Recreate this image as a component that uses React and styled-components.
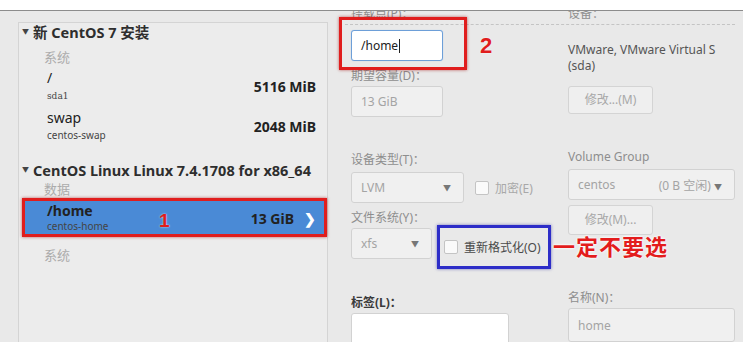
import React from 'react'
import styled, { createGlobalStyle } from 'styled-components'

const Global = createGlobalStyle`
  body {
    margin: 0;
    background: #e8e8e8;
    font-family: "Noto Sans", "Noto Sans CJK SC", sans-serif;
  }
`

const Page = styled.div`
  width: 743px;
  height: 342px;
  overflow: hidden;
  display: flex;
  flex-direction: column;
  background: #e9e9e9;
`

const TopBar = styled.div`
  height: 10px;
  background: #fff;
  border-bottom: 1px solid #8c8c8c;
  flex: none;
  position: relative;
  z-index: 5;
`

const Main = styled.div`
  display: flex;
  flex: 1;
  min-height: 0;
`

const LeftPanel = styled.div`
  margin: 11px 0 0 18px;
  width: 308px;
  border: 1px solid #d4d4d4;
  border-bottom: none;
  background: #ececec;
  display: flex;
  flex-direction: column;
`

const Header = styled.div`
  margin-top: ${p => p.mt}px;
  height: 16px;
  line-height: 16px;
  padding-left: 3px;
  font-size: 14.5px;
  font-weight: 700;
  color: #2e2e2e;
  white-space: nowrap;
  display: flex;
  align-items: center;
  gap: 3px;
`

const Tri = styled.span`
  font-size: 7px;
  color: #444;
  width: 8px;
`

const Category = styled.div`
  margin-top: ${p => p.mt}px;
  padding-left: 25px;
  height: 15px;
  line-height: 15px;
  font-size: 13px;
  color: #ababab;
`

const Item = styled.div`
  margin: ${p => p.mt}px 0 0 ${p => (p.selected ? 3 : 0)}px;
  padding: ${p => (p.selected ? '2px 8px 1px 22px' : '0 11px 0 28px')};
  display: flex;
  justify-content: space-between;
  align-items: center;
  background: ${p => (p.selected ? '#4a8ad6' : 'transparent')};
  border: ${p => (p.selected ? '3px solid #e01d1d' : 'none')};
  box-shadow: ${p => (p.selected ? '0 0 3px rgba(160,0,0,0.6)' : 'none')};
  position: relative;
`

const ItemText = styled.div`
  display: flex;
  flex-direction: column;
`

const ItemName = styled.div`
  font-size: 14px;
  line-height: 16px;
  color: #222;
  font-weight: ${p => (p.bold ? 700 : 400)};
`

const ItemSub = styled.div`
  font-size: ${p => (p.serif ? 9 : 10)}px;
  line-height: 14px;
  margin-top: ${p => p.mt || 0}px;
  color: #444;
  font-family: ${p => (p.serif ? '"DejaVu Serif", serif' : 'inherit')};
`

const Size = styled.div`
  font-size: 14px;
  font-weight: 700;
  color: #222;
  display: flex;
  align-items: center;
  gap: 10px;
`

const Chevron = styled.span`
  color: #fff;
  font-size: 14px;
  font-weight: 700;
`

const Num = styled.span`
  position: absolute;
  left: ${p => p.x}px;
  top: ${p => p.y}px;
  color: #e01d1d;
  font-family: "Liberation Sans", Arial, sans-serif;
  font-weight: 700;
  font-size: ${p => p.size || 20}px;
  text-shadow: 0 0 2px rgba(255, 255, 255, 0.8);
  line-height: 1;
`

const RightPane = styled.div`
  flex: 1;
  position: relative;
  padding-left: 23px;
  display: flex;
`

const Dashed = styled.div`
  position: absolute;
  left: 17px;
  right: 8px;
  top: 13px;
  border-top: 1px dashed #c4c4c4;
`

const Column = styled.div`
  width: ${p => p.w}px;
  display: flex;
  flex-direction: column;
  position: relative;
`

const Label = styled.div`
  margin-top: ${p => p.mt || 0}px;
  height: 14px;
  line-height: 14px;
  font-size: 12px;
  color: ${p => (p.dark ? '#3a3a3a' : '#8e8e8e')};
  font-weight: ${p => (p.dark ? 700 : 400)};
  white-space: nowrap;
  position: relative;
  z-index: 1;
  background: ${p => (p.bg ? '#e9e9e9' : 'transparent')};
  align-self: flex-start;
  padding-right: 4px;
`

const Field = styled.div`
  margin-top: ${p => p.mt || 0}px;
  width: ${p => p.w}px;
  height: ${p => p.h || 31}px;
  box-sizing: border-box;
  border: 1px solid ${p => (p.focus ? '#6d9fd8' : '#d2d2d2')};
  border-radius: 3px;
  background: ${p => (p.white ? '#fff' : '#f0f0f0')};
  box-shadow: ${p => (p.focus ? '0 0 1px #9cc0ea' : 'none')};
  display: flex;
  align-items: center;
  padding: 0 9px;
  font-size: 12px;
  color: ${p => (p.focus ? '#222' : '#a4a4a4')};
  flex: none;
`

const Caret = styled.span`
  display: inline-block;
  width: 1px;
  height: 14px;
  background: #222;
  margin-left: 1px;
`

const Dropdown = styled(Field)`
  justify-content: space-between;
  padding-right: 12px;
`

const Arrow = styled.span`
  font-size: 8px;
  color: #777;
`

const Button = styled.div`
  margin-top: ${p => p.mt || 0}px;
  width: 85px;
  height: ${p => p.h || 31}px;
  box-sizing: border-box;
  border: 1px solid #d4d4d4;
  border-radius: 3px;
  background: #efefef;
  display: flex;
  align-items: ${p => (p.top ? 'flex-start' : 'center')};
  padding-top: ${p => (p.top ? 6 : 0)}px;
  justify-content: center;
  font-size: 12px;
  line-height: 16px;
  color: #a8a8a8;
`

const Line = styled.div`
  font-size: 12px;
  line-height: 16px;
  color: #555;
  margin-top: ${p => p.mt || 0}px;
  white-space: nowrap;
`

const ControlRow = styled.div`
  margin-top: ${p => p.mt || 0}px;
  height: 31px;
  display: flex;
  align-items: center;
  gap: ${p => p.gap || 0}px;
`

const Check = styled.span`
  width: 12px;
  height: 12px;
  border: 1px solid #c4c4c4;
  border-radius: 2px;
  background: #fafafa;
  flex: none;
`

const CheckLabel = styled.label`
  display: flex;
  align-items: center;
  gap: 6px;
  font-size: 12px;
  color: ${p => (p.dark ? '#4a4a4a' : '#a8a8a8')};
  white-space: nowrap;
`

const BlueBox = styled.div`
  width: 114px;
  height: 44px;
  box-sizing: border-box;
  border: 3px solid #2d2dc8;
  box-shadow: 0 0 3px rgba(40, 40, 160, 0.6);
  display: flex;
  align-items: center;
  padding-left: 4px;
  margin-top: 6px;
  flex: none;
`

const RedBox = styled.div`
  position: absolute;
  left: 11px;
  top: 6px;
  width: 128px;
  height: 53px;
  box-sizing: border-box;
  border: 3px solid #e01d1d;
  box-shadow: 0 0 3px rgba(160, 0, 0, 0.6);
  z-index: 2;
`

const Note = styled.div`
  position: absolute;
  left: 225px;
  top: 223px;
  color: #e31c1c;
  font-size: 22px;
  font-weight: 700;
  font-family: "Noto Sans CJK SC", sans-serif;
  letter-spacing: 1px;
  text-shadow: 0 0 2px #fff, 0 0 3px #fff;
  z-index: 3;
  line-height: 22px;
`

export default function App() {
  return (
    <Page>
      <Global />
      <TopBar />
      <Main>
        <LeftPanel>
          <Header mt={1}><Tri>▼</Tri>新 CentOS 7 安装</Header>
          <Category mt={10}>系统</Category>
          <Item mt={5}>
            <ItemText>
              <ItemName>/</ItemName>
              <ItemSub mt={3} serif>sda1</ItemSub>
            </ItemText>
            <Size>5116 MiB</Size>
          </Item>
          <Item mt={7}>
            <ItemText>
              <ItemName>swap</ItemName>
              <ItemSub mt={2}>centos-swap</ItemSub>
            </ItemText>
            <Size>2048 MiB</Size>
          </Item>
          <Header mt={20}><Tri>▼</Tri>CentOS Linux Linux 7.4.1708 for x86_64</Header>
          <Category mt={4}>数据</Category>
          <Item selected mt={1}>
            <ItemText>
              <ItemName bold>/home</ItemName>
              <ItemSub>centos-home</ItemSub>
            </ItemText>
            <Size>13 GiB<Chevron>❯</Chevron></Size>
            <Num x={134} y={10} size={19}>1</Num>
          </Item>
          <Category mt={11}>系统</Category>
        </LeftPanel>

        <RightPane>
          <Dashed />
          <RedBox />
          <Num x={152} y={24} size={22}>2</Num>
          <Column w={217}>
            <Label bg mt={-4}>挂载点(P)：</Label>
            <Field mt={9} w={92} white focus>/home<Caret /></Field>
            <Label mt={8}>期望容量(D)：</Label>
            <Field mt={3} w={92}>13 GiB</Field>
            <Label mt={36}>设备类型(T)：</Label>
            <ControlRow mt={5} gap={11}>
              <Dropdown w={113}>LVM<Arrow>▼</Arrow></Dropdown>
              <CheckLabel><Check />加密(E)</CheckLabel>
            </ControlRow>
            <Label mt={8}>文件系统(Y)：</Label>
            <ControlRow mt={3} gap={5}>
              <Dropdown w={81}>xfs<Arrow>▼</Arrow></Dropdown>
              <BlueBox>
                <CheckLabel dark><Check />重新格式化(O)</CheckLabel>
              </BlueBox>
            </ControlRow>
            <Label mt={37} dark>标签(L)：</Label>
            <Field mt={3} w={158} h={34} white />
          </Column>
          <Column w={167}>
            <Label bg mt={-4}>设备：</Label>
            <Line mt={21}>VMware, VMware Virtual S</Line>
            <Line>(sda)</Line>
            <Button mt={12}>修改...(M)</Button>
            <Label mt={36}>Volume Group</Label>
            <Dropdown mt={5} w={167}>
              <span>centos</span>
              <span>(0 B 空闲) <Arrow>▼</Arrow></span>
            </Dropdown>
            <Button mt={5} h={32} top>修改(M)...</Button>
            <Label mt={56}>名称(N)：</Label>
            <Field mt={3} w={167} h={34}>home</Field>
          </Column>
          <Note>一定不要选</Note>
        </RightPane>
      </Main>
    </Page>
  )
}
